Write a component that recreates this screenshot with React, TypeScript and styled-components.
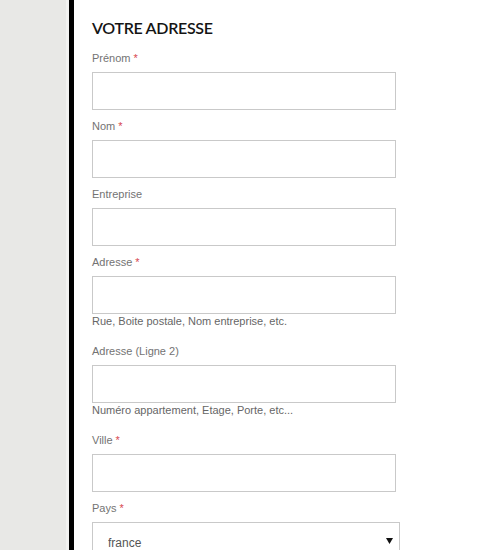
import React from "react";
import styled, { createGlobalStyle } from "styled-components";

const GlobalStyle = createGlobalStyle`
    html, body {
        margin: 0;
        padding: 0;
        background: #ffffff;
    }
    body {
        font-family: "Liberation Sans", Arial, sans-serif;
    }
`;

const Page = styled.div`
    display: flex;
    min-height: 100vh;
    height: 550px;
    overflow: hidden;
`;

const Rail = styled.div`
    width: 66px;
    flex-shrink: 0;
    background: #e8e8e6;
    border-right: 3px solid #f1f1f0;
`;

const Panel = styled.main`
    flex: 1;
    background: #fff;
    border-left: 5px solid #000;
    padding: 18px 18px 0 18px;
`;

const Title = styled.h2`
    margin: 0 0 12px 0;
    font-family: Lato, "Liberation Sans", sans-serif;
    font-weight: 600;
    font-size: 16px;
    line-height: 20px;
    letter-spacing: -0.3px;
    color: #141414;
    text-transform: uppercase;
`;

type FieldProps = {
    hasHint?: boolean;
};

const Field = styled.div<FieldProps>`
    display: flex;
    flex-direction: column;
    align-items: flex-start;
    margin-bottom: ${(props) => (props.hasHint ? "15px" : "8px")};
`;

const Label = styled.label`
    font-size: 11px;
    line-height: 16px;
    color: #737373;
    margin-bottom: 6px;
`;

const Required = styled.span`
    color: #d7474f;
    margin-left: 3px;
`;

const TextInput = styled.input`
    box-sizing: border-box;
    width: 304px;
    height: 38px;
    border: 1px solid #c9c9c9;
    background: #fff;
    padding: 0 12px;
    font-family: "Liberation Sans", Arial, sans-serif;
    font-size: 12px;
    outline: none;
`;

const Hint = styled.small`
    font-size: 11px;
    line-height: 14px;
    color: #666;
`;

const SelectWrap = styled.div`
    position: relative;
    width: 308px;
`;

const Select = styled.select`
    box-sizing: border-box;
    width: 100%;
    appearance: none;
    -webkit-appearance: none;
    border: 1px solid #c9c9c9;
    border-radius: 0;
    background: #fff;
    padding: 13px 15px;
    font-family: "Liberation Sans", Arial, sans-serif;
    font-size: 12px;
    line-height: 14px;
    color: #555;
    outline: none;
`;

const Arrow = styled.svg`
    position: absolute;
    top: 16px;
    right: 7px;
    pointer-events: none;
`;

type FieldDef = {
    label: string;
    required?: boolean;
    hint?: string;
};

const fields: FieldDef[] = [
    { label: "Prénom", required: true },
    { label: "Nom", required: true },
    { label: "Entreprise" },
    { label: "Adresse", required: true, hint: "Rue, Boite postale, Nom entreprise, etc." },
    { label: "Adresse (Ligne 2)", hint: "Numéro appartement, Etage, Porte, etc..." },
    { label: "Ville", required: true },
];

export default function App() {
    return (
        <>
            <GlobalStyle />
            <Page>
                <Rail />
                <Panel>
                    <Title>Votre adresse</Title>
                    {fields.map((f) => (
                        <Field key={f.label} hasHint={!!f.hint}>
                            <Label>
                                {f.label}
                                {f.required && <Required>*</Required>}
                            </Label>
                            <TextInput type="text" />
                            {f.hint && <Hint>{f.hint}</Hint>}
                        </Field>
                    ))}
                    <Field>
                        <Label>
                            Pays<Required>*</Required>
                        </Label>
                        <SelectWrap>
                            <Select defaultValue="france">
                                <option value="france">france</option>
                                <option value="belgique">belgique</option>
                                <option value="suisse">suisse</option>
                            </Select>
                            <Arrow width="7" height="6" viewBox="0 0 7 6">
                                <polygon points="0,0 7,0 3.5,6" fill="#111" />
                            </Arrow>
                        </SelectWrap>
                    </Field>
                </Panel>
            </Page>
        </>
    );
}
